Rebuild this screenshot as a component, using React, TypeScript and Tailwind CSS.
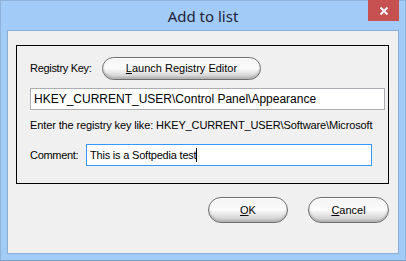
const ui = { fontFamily: '"Liberation Sans", Arial, sans-serif' };

function PillButton({ mnemonic, rest, className }: { mnemonic: string; rest: string; className: string }) {
  return (
    <button
      className={`flex items-center justify-center rounded-full border border-[#6f6f6f] bg-linear-to-b from-[#f4f4f4] via-[#fbfbfb] to-[#c6c6c6] text-[11px] text-black shadow-[inset_0_1px_1px_#ffffff,inset_0_-2px_2px_#b4b4b4] ${className}`}
      style={ui}
    >
      <span>
        <span className="underline underline-offset-1">{mnemonic}</span>
        {rest}
      </span>
    </button>
  );
}

export default function App() {
  return (
    <div className="w-[406px] h-[261px] bg-[#a3cbf7] border border-[#8fb3da] border-b-[#7a9ec2] flex flex-col">
      <div className="relative h-[29px] flex items-center justify-center">
        <span className="text-[15px] text-[#1e1e3a] pt-[1px]" style={{ fontFamily: '"Noto Sans", "Open Sans", sans-serif' }}>
          Add to list
        </span>
        <div className="absolute top-[-1px] right-[6px] w-[31px] h-[21px] bg-[#c75050] flex items-center justify-center">
          <svg width={10} height={8} viewBox="0 0 10 8">
            <path d="M1.5 0.5 L8.5 7.5 M8.5 0.5 L1.5 7.5" stroke="#fff" strokeWidth={2} />
          </svg>
        </div>
      </div>
      <div className="mx-[6px] h-[224px] border border-[#8aaed6] bg-[#f0f0f0] flex flex-col" style={ui}>
        <div className="ml-[8px] mt-[14px] w-[373px] h-[139px] border border-black flex flex-col pl-[13px] text-[11px] text-black">
          <div className="mt-[11px] flex items-center h-[23px]">
            <span className="w-[72px] tracking-[-0.3px]">Registry Key:</span>
            <PillButton mnemonic="L" rest="aunch Registry Editor" className="w-[159px] h-[23px]" />
          </div>
          <div className="mt-[8px] w-[355px] h-[22px] bg-white border border-[#abadb3] flex items-center pl-[3px] text-[12px]">
            HKEY_CURRENT_USER\Control Panel\Appearance
          </div>
          <div className="mt-[9px] h-[12px] flex items-center tracking-[-0.12px]">
            Enter the registry key like: HKEY_CURRENT_USER\Software\Microsoft
          </div>
          <div className="mt-[13px] flex items-center">
            <span className="w-[56px] tracking-[-0.3px]">Comment:</span>
            <div className="w-[286px] h-[22px] bg-white border border-[#3399ff] flex items-center pl-[3px] text-[11px] tracking-[-0.2px]">
              This is a Softpedia test
              <span className="inline-block w-px h-[14px] bg-black" />
            </div>
          </div>
        </div>
        <div className="mt-[13px] flex justify-end gap-[20px] mr-[9px]">
          <PillButton mnemonic="O" rest="K" className="w-[80px] h-[26px]" />
          <PillButton mnemonic="C" rest="ancel" className="w-[81px] h-[26px]" />
        </div>
      </div>
    </div>
  );
}
